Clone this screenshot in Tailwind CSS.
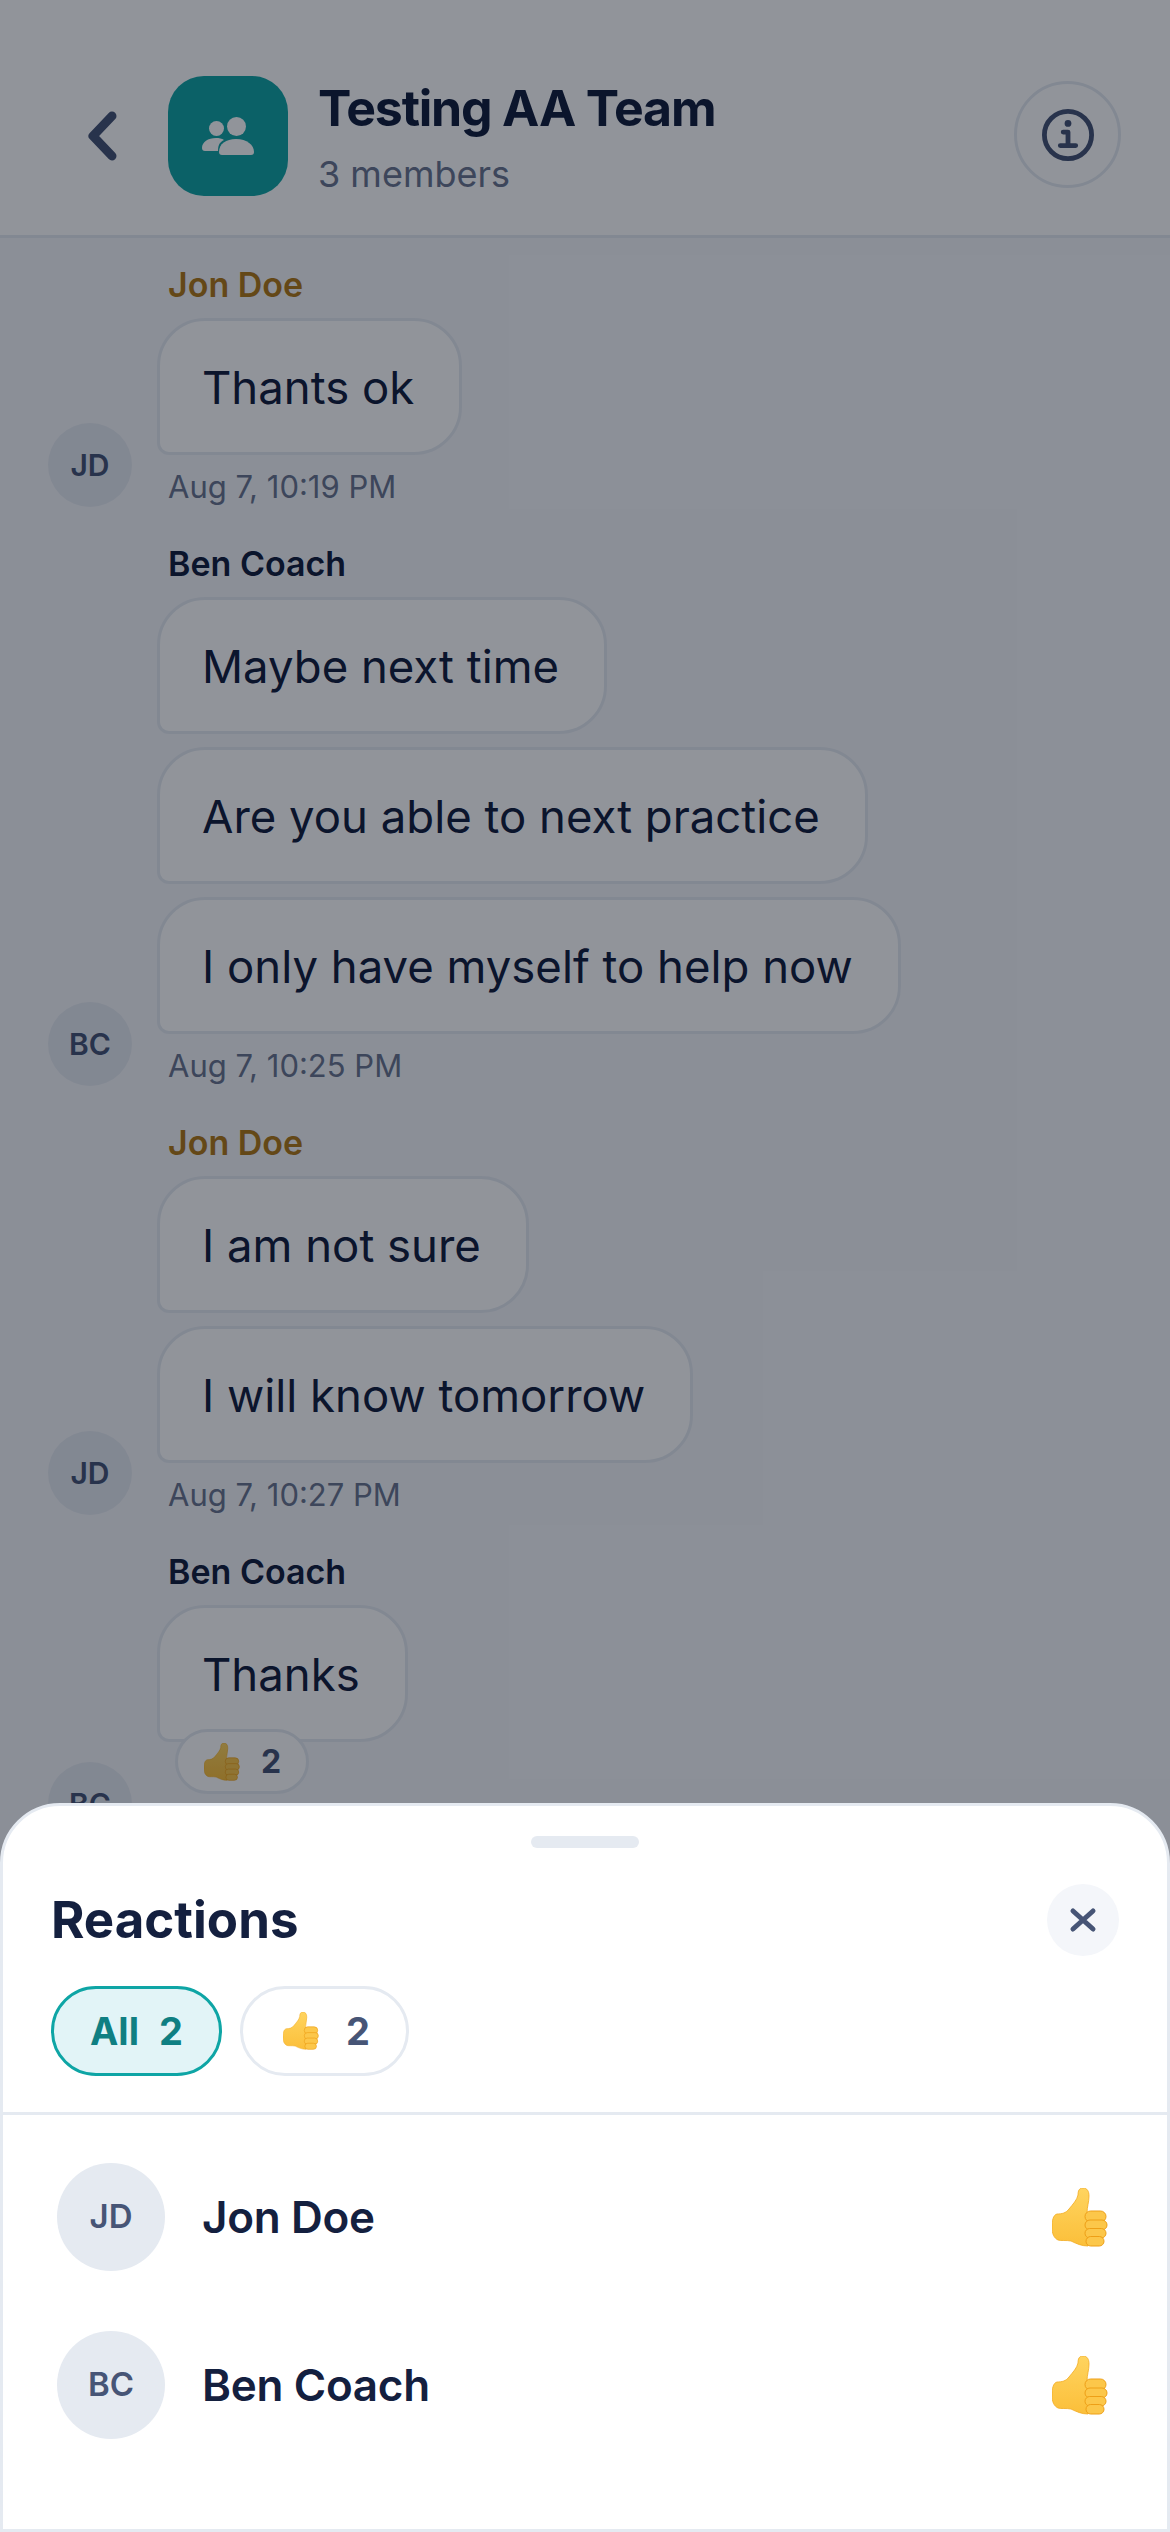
<!DOCTYPE html>
<html lang="en">
<head>
  <meta charset="UTF-8" />
  <meta name="viewport" content="width=device-width, initial-scale=1.0" />
  <title>Testing AA Team | Reactions</title>
  <script src="https://cdn.jsdelivr.net/npm/@tailwindcss/browser@4"></script>
</head>
<body class="bg-[#f5f6fa]">

  <svg class="absolute w-0 h-0" width="0" height="0">
    <defs>
      <linearGradient id="thumbFill" x1="0" y1="0" x2="0" y2="1">
        <stop offset="0" stop-color="#ffd45f" />
        <stop offset="1" stop-color="#fbbf3a" />
      </linearGradient>
      <symbol id="thumb" viewBox="0 0 56 59">
        <path d="M5 26 C10 26 14 25 17 21 C21 16 25 12 26 7 C26 3 27 0 31 0 C35 0 37 3 37 8 C37 14 35 19 35 25 L36 58 C30 58 25 56 19 53 C14 52 9 53 6 52 C2 50 0 46 0 39 C0 33 1 27 5 26 Z" fill="url(#thumbFill)" stroke="#f2ab1f" stroke-width="0.8" />
        <rect x="33" y="23" width="21" height="11" rx="5.5" fill="#fcc74a" stroke="#ee9f16" stroke-width="1" />
        <rect x="33" y="32" width="22" height="10" rx="5" fill="#fcc74a" stroke="#ee9f16" stroke-width="1" />
        <rect x="33" y="40.500" width="21" height="9.500" rx="4.700" fill="#fcc74a" stroke="#ee9f16" stroke-width="1" />
        <rect x="34" y="48.500" width="18" height="9.500" rx="4.700" fill="#fcc74a" stroke="#ee9f16" stroke-width="1" />
      </symbol>
    </defs>
  </svg>

  <div class="relative w-[1170px] h-[2532px] overflow-hidden font-['Inter',sans-serif] text-[#14203f]">

    <!-- header -->
    <header class="flex items-center h-[238px] pt-[36px] bg-white border-b-[3px] border-[#e5eaf1] pl-[84px] pr-[49px]">
      <svg class="w-[36px] h-[56px] mr-[48px]" viewBox="0 0 36 56" fill="none" stroke="#475576" stroke-width="9" stroke-linecap="round" stroke-linejoin="round">
        <path d="M28 8 L9 28 L28 48" />
      </svg>
      <div class="flex items-center justify-center w-[120px] h-[120px] rounded-[36px] bg-[#15a5a5]">
        <svg class="w-[52px] h-[38px]" viewBox="0 0 52 38" fill="#fff">
          <circle cx="14.500" cy="11.500" r="7.500" />
          <circle cx="34.500" cy="9.500" r="9.500" />
          <path d="M0 31 C0 25 6 21 14 21 C17 21 20 21.500 22 23 C18 25 16 27.500 16 34 L3 34 C1 34 0 33 0 31 Z" />
          <path d="M17 35 C17 27 24 22 34 22 C45 22 52 28 52 35 C52 37 51 38 49 38 L20 38 C18 38 17 37 17 35 Z" />
        </svg>
      </div>
      <div class="ml-[30px] flex-1 mt-[5px]">
        <h1 class="text-[50px] leading-[60px] font-bold tracking-[-1.2px]">Testing AA Team</h1>
        <p class="text-[36px] leading-[48px] mt-[12px] text-[#6b7690]">3 members</p>
      </div>
      <button class="flex items-center justify-center w-[107px] h-[107px] rounded-full border-[3px] border-[#e5eaf1] mt-[-2px]">
        <svg class="w-[52px] h-[52px]" viewBox="0 0 54 54" fill="none" stroke="#475576">
          <circle cx="27" cy="27" r="24.500" stroke-width="5" />
          <circle cx="27" cy="15" r="3.500" fill="#475576" stroke="none" />
          <path d="M22 24 H27 V38 M19 38 H35" stroke-width="5" stroke-linecap="round" stroke-linejoin="round" />
        </svg>
      </button>
    </header>

    <!-- messages -->
    <main class="pl-[48px] pt-[27px] flex flex-col gap-[37px]">

      <section class="flex items-end gap-[25px]">
        <div class="flex items-center justify-center w-[84px] h-[84px] rounded-full bg-[#e5eaf1] text-[30px] font-semibold text-[#475576]">JD</div>
        <div class="flex flex-col items-start">
          <p class="ml-[11px] mb-[13px] text-[34px] leading-[40px] font-semibold text-[#b17a1a]">Jon Doe</p>
          <div class="flex flex-col items-start gap-[13px]">
            <div class="pl-[42px] pr-[45px] pt-[3px] h-[137px] flex items-center text-[45.5px] bg-white border-[3px] border-[#e5eaf1] rounded-[48px] rounded-bl-[12px]">Thants ok</div>
          </div>
          <p class="ml-[11px] mt-[11px] text-[31px] leading-[41px] text-[#6b7690]">Aug 7, 10:19 PM</p>
        </div>
      </section>

      <section class="flex items-end gap-[25px]">
        <div class="flex items-center justify-center w-[84px] h-[84px] rounded-full bg-[#e5eaf1] text-[30px] font-semibold text-[#475576]">BC</div>
        <div class="flex flex-col items-start">
          <p class="ml-[11px] mb-[13px] text-[34px] leading-[40px] font-semibold">Ben Coach</p>
          <div class="flex flex-col items-start gap-[13px]">
            <div class="pl-[42px] pr-[45px] pt-[3px] h-[137px] flex items-center text-[45.5px] bg-white border-[3px] border-[#e5eaf1] rounded-[48px] rounded-bl-[12px]">Maybe next time</div>
            <div class="pl-[42px] pr-[45px] pt-[3px] h-[137px] flex items-center text-[45.5px] bg-white border-[3px] border-[#e5eaf1] rounded-[48px] rounded-bl-[12px]">Are you able to next practice</div>
            <div class="pl-[42px] pr-[45px] pt-[3px] h-[137px] flex items-center text-[45.5px] bg-white border-[3px] border-[#e5eaf1] rounded-[48px] rounded-bl-[12px]">I only have myself to help now</div>
          </div>
          <p class="ml-[11px] mt-[11px] text-[31px] leading-[41px] text-[#6b7690]">Aug 7, 10:25 PM</p>
        </div>
      </section>

      <section class="flex items-end gap-[25px]">
        <div class="flex items-center justify-center w-[84px] h-[84px] rounded-full bg-[#e5eaf1] text-[30px] font-semibold text-[#475576]">JD</div>
        <div class="flex flex-col items-start">
          <p class="ml-[11px] mb-[13px] text-[34px] leading-[40px] font-semibold text-[#b17a1a]">Jon Doe</p>
          <div class="flex flex-col items-start gap-[13px]">
            <div class="pl-[42px] pr-[45px] pt-[3px] h-[137px] flex items-center text-[45.5px] bg-white border-[3px] border-[#e5eaf1] rounded-[48px] rounded-bl-[12px]">I am not sure</div>
            <div class="pl-[42px] pr-[45px] pt-[3px] h-[137px] flex items-center text-[45.5px] bg-white border-[3px] border-[#e5eaf1] rounded-[48px] rounded-bl-[12px]">I will know tomorrow</div>
          </div>
          <p class="ml-[11px] mt-[11px] text-[31px] leading-[41px] text-[#6b7690]">Aug 7, 10:27 PM</p>
        </div>
      </section>

      <section class="flex items-end gap-[25px]">
        <div class="flex items-center justify-center w-[84px] h-[84px] rounded-full bg-[#e5eaf1] text-[30px] font-semibold text-[#475576]">BC</div>
        <div class="flex flex-col items-start">
          <p class="ml-[11px] mb-[13px] text-[34px] leading-[40px] font-semibold">Ben Coach</p>
          <div class="pl-[42px] pr-[45px] pt-[3px] h-[137px] flex items-center text-[45.5px] bg-white border-[3px] border-[#e5eaf1] rounded-[48px] rounded-bl-[12px]">Thanks</div>
          <div class="relative flex items-center gap-[21px] ml-[18px] mt-[-13px] mb-[52px] h-[65px] pl-[26px] pr-[25px] rounded-full bg-white border-[3px] border-[#e5eaf1]">
            <svg class="w-[36px] h-[38px]"><use href="#thumb" /></svg>
            <span class="text-[32px] font-bold text-[#475576]">2</span>
          </div>
        </div>
      </section>
    </main>

    <!-- scrim -->
    <div class="absolute inset-0 bg-[#000816]/43"></div>

    <!-- reactions sheet -->
    <aside class="absolute left-0 right-0 bottom-0 h-[729px] bg-white border-[3px] border-[#e5eaf1] rounded-t-[60px]">
      <div class="w-[108px] h-[12px] mx-auto mt-[30px] rounded-full bg-[#e5eaf1]"></div>
      <div class="flex items-center justify-between pl-[48px] pr-[48px] mt-[36px]">
        <h2 class="text-[51px] leading-[72px] font-bold">Reactions</h2>
        <button class="flex items-center justify-center w-[72px] h-[72px] rounded-full bg-[#f4f6fa]">
          <svg class="w-[30px] h-[30px]" viewBox="0 0 30 30" fill="none" stroke="#475576" stroke-width="5" stroke-linecap="round">
            <path d="M5 6 L25 24 M25 6 L5 24" />
          </svg>
        </button>
      </div>
      <div class="flex items-center gap-[18px] pl-[48px] mt-[30px] pb-[36px] border-b-[3px] border-[#e5eaf1]">
        <div class="flex items-center gap-[20px] h-[90px] px-[36px] rounded-full bg-[#e2f4f7] border-[3px] border-[#0ea5a5] text-[38px] font-bold text-[#0f7f82]">
          <span>All</span><span>2</span>
        </div>
        <div class="flex items-center gap-[27px] h-[90px] pl-[40px] pr-[36px] rounded-full border-[3px] border-[#e5eaf1] text-[38px] font-bold text-[#475576]">
          <svg class="w-[36px] h-[38px]"><use href="#thumb" /></svg><span>2</span>
        </div>
      </div>
      <ul class="pl-[54px] pr-[59px] pt-[48px] flex flex-col gap-[60px]">
        <li class="flex items-center">
          <div class="flex items-center justify-center w-[108px] h-[108px] rounded-full bg-[#e5eaf1] text-[33px] font-semibold text-[#475576]">JD</div>
          <span class="ml-[37px] flex-1 text-[44px] font-semibold tracking-[-0.3px]">Jon Doe</span>
          <svg class="w-[56px] h-[59px]"><use href="#thumb" /></svg>
        </li>
        <li class="flex items-center">
          <div class="flex items-center justify-center w-[108px] h-[108px] rounded-full bg-[#e5eaf1] text-[33px] font-semibold text-[#475576]">BC</div>
          <span class="ml-[37px] flex-1 text-[44px] font-semibold tracking-[-0.3px]">Ben Coach</span>
          <svg class="w-[56px] h-[59px]"><use href="#thumb" /></svg>
        </li>
      </ul>
    </aside>
  </div>

</body>
</html>
